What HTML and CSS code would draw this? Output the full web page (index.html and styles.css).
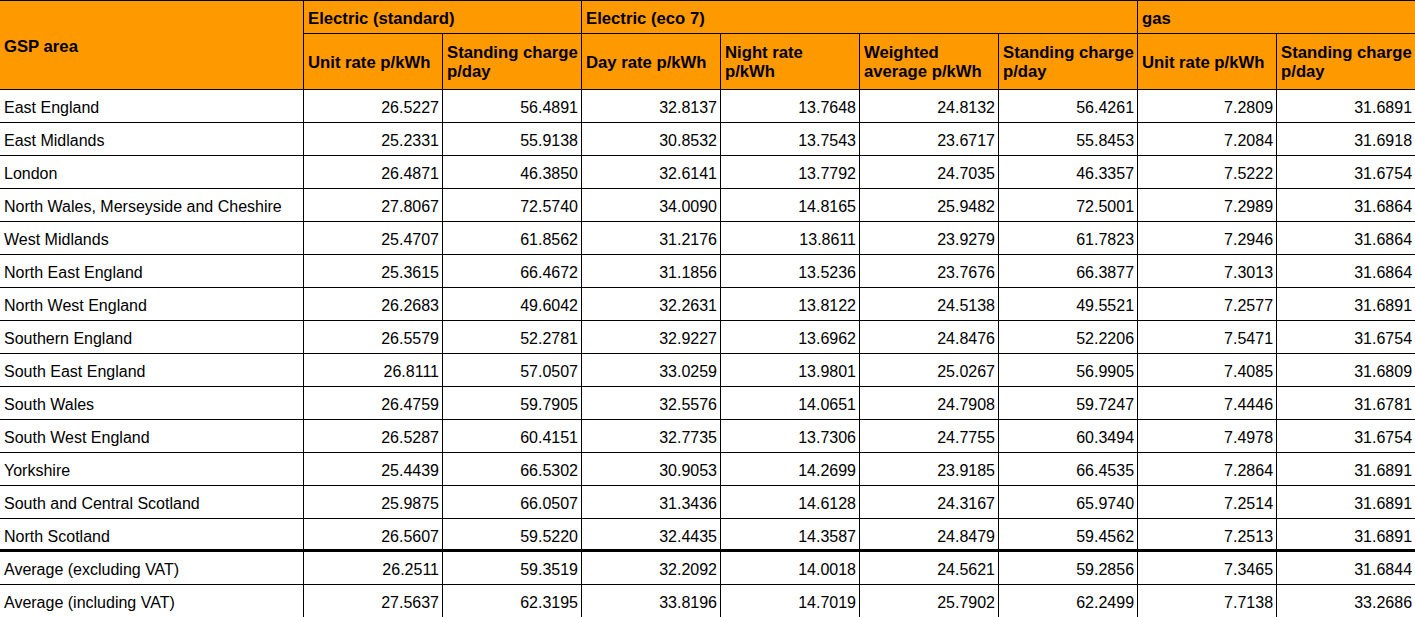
FILE: index.html
```html
<!DOCTYPE html>
<html lang="en">
<head>
<meta charset="utf-8">
<title>Energy price cap by GSP area</title>
<link rel="stylesheet" href="styles.css">
</head>
<body>
<table class="rates">
  <colgroup>
    <col class="c-area">
    <col class="c-num"><col class="c-num">
    <col class="c-num"><col class="c-num"><col class="c-num"><col class="c-num">
    <col class="c-num"><col class="c-num">
  </colgroup>
  <thead>
    <tr class="group-row">
      <th class="area-head" rowspan="2">GSP area</th>
      <th colspan="2">Electric (standard)</th>
      <th colspan="4">Electric (eco 7)</th>
      <th colspan="2">gas</th>
    </tr>
    <tr class="sub-row">
      <th>Unit rate p/kWh</th>
      <th>Standing charge p/day</th>
      <th>Day rate p/kWh</th>
      <th>Night rate p/kWh</th>
      <th>Weighted average p/kWh</th>
      <th>Standing charge p/day</th>
      <th>Unit rate p/kWh</th>
      <th>Standing charge p/day</th>
    </tr>
  </thead>
  <tbody>
    <tr><td>East England</td><td>26.5227</td><td>56.4891</td><td>32.8137</td><td>13.7648</td><td>24.8132</td><td>56.4261</td><td>7.2809</td><td>31.6891</td></tr>
    <tr><td>East Midlands</td><td>25.2331</td><td>55.9138</td><td>30.8532</td><td>13.7543</td><td>23.6717</td><td>55.8453</td><td>7.2084</td><td>31.6918</td></tr>
    <tr><td>London</td><td>26.4871</td><td>46.3850</td><td>32.6141</td><td>13.7792</td><td>24.7035</td><td>46.3357</td><td>7.5222</td><td>31.6754</td></tr>
    <tr><td>North Wales, Merseyside and Cheshire</td><td>27.8067</td><td>72.5740</td><td>34.0090</td><td>14.8165</td><td>25.9482</td><td>72.5001</td><td>7.2989</td><td>31.6864</td></tr>
    <tr><td>West Midlands</td><td>25.4707</td><td>61.8562</td><td>31.2176</td><td>13.8611</td><td>23.9279</td><td>61.7823</td><td>7.2946</td><td>31.6864</td></tr>
    <tr><td>North East England</td><td>25.3615</td><td>66.4672</td><td>31.1856</td><td>13.5236</td><td>23.7676</td><td>66.3877</td><td>7.3013</td><td>31.6864</td></tr>
    <tr><td>North West England</td><td>26.2683</td><td>49.6042</td><td>32.2631</td><td>13.8122</td><td>24.5138</td><td>49.5521</td><td>7.2577</td><td>31.6891</td></tr>
    <tr><td>Southern England</td><td>26.5579</td><td>52.2781</td><td>32.9227</td><td>13.6962</td><td>24.8476</td><td>52.2206</td><td>7.5471</td><td>31.6754</td></tr>
    <tr><td>South East England</td><td>26.8111</td><td>57.0507</td><td>33.0259</td><td>13.9801</td><td>25.0267</td><td>56.9905</td><td>7.4085</td><td>31.6809</td></tr>
    <tr><td>South Wales</td><td>26.4759</td><td>59.7905</td><td>32.5576</td><td>14.0651</td><td>24.7908</td><td>59.7247</td><td>7.4446</td><td>31.6781</td></tr>
    <tr><td>South West England</td><td>26.5287</td><td>60.4151</td><td>32.7735</td><td>13.7306</td><td>24.7755</td><td>60.3494</td><td>7.4978</td><td>31.6754</td></tr>
    <tr><td>Yorkshire</td><td>25.4439</td><td>66.5302</td><td>30.9053</td><td>14.2699</td><td>23.9185</td><td>66.4535</td><td>7.2864</td><td>31.6891</td></tr>
    <tr><td>South and Central Scotland</td><td>25.9875</td><td>66.0507</td><td>31.3436</td><td>14.6128</td><td>24.3167</td><td>65.9740</td><td>7.2514</td><td>31.6891</td></tr>
    <tr class="last-area"><td>North Scotland</td><td>26.5607</td><td>59.5220</td><td>32.4435</td><td>14.3587</td><td>24.8479</td><td>59.4562</td><td>7.2513</td><td>31.6891</td></tr>
    <tr class="avg-row"><td>Average (excluding VAT)</td><td>26.2511</td><td>59.3519</td><td>32.2092</td><td>14.0018</td><td>24.5621</td><td>59.2856</td><td>7.3465</td><td>31.6844</td></tr>
    <tr class="avg-row"><td>Average (including VAT)</td><td>27.5637</td><td>62.3195</td><td>33.8196</td><td>14.7019</td><td>25.7902</td><td>62.2499</td><td>7.7138</td><td>33.2686</td></tr>
  </tbody>
</table>
</body>
</html>
```
FILE: styles.css
```css
html, body {
  margin: 0;
  padding: 0;
  background: #ffffff;
}

body {
  font-family: "Liberation Sans", Arial, sans-serif;
  font-size: 16px;
  color: #000000;
  overflow: hidden;
}

.rates {
  border-collapse: collapse;
  table-layout: fixed;
  width: 1416px;
  margin-left: -1px;
}

.c-area { width: 304px; }
.c-num { width: 139px; }

.rates th,
.rates td {
  border: 1px solid #000000;
  padding: 9px 3px 5px 4px;
  line-height: 18px;
  white-space: nowrap;
  overflow: hidden;
}

.rates th {
  background: #ff9900;
  font-size: 16.7px;
  font-weight: bold;
  text-align: left;
  vertical-align: bottom;
}

.rates .area-head {
  vertical-align: middle;
}

.sub-row th {
  white-space: normal;
  vertical-align: middle;
  line-height: 19px;
  padding: 9px 3px 8px 4px;
}

.rates td {
  text-align: right;
  vertical-align: bottom;
}

.rates td:first-child {
  text-align: left;
}

.last-area td {
  border-bottom: 3px solid #000000;
  padding-bottom: 3px;
}
```
